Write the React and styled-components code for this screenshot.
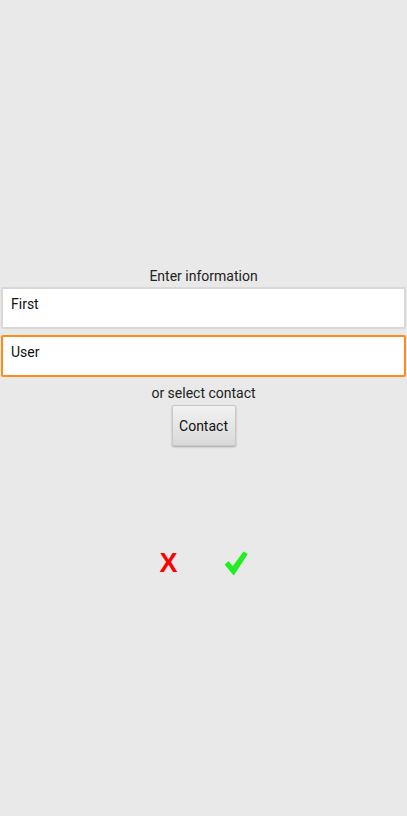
import React from "react";
import styled, { createGlobalStyle } from "styled-components";

const Global = createGlobalStyle`
  html, body {
    margin: 0;
    padding: 0;
    background: #e9e9e9;
    font-family: Roboto, "Liberation Sans", sans-serif;
  }
`;

const CheckMark = () => (
  <svg width="24" height="25" viewBox="0 0 24 25">
    <path
      d="M1.5 13.5 L4.5 11 L8.8 16.2 L19.8 1.2 L23 3.2 L9.6 23.6 Z"
      fill="#22ee22"
      stroke="#22ee22"
      strokeWidth="1.2"
      strokeLinejoin="round"
    />
  </svg>
);

const App = () => {
  return (
    <Page>
      <Global />
      <Label>Enter information</Label>
      <Field defaultValue="First" />
      <Field defaultValue="User" focused />
      <Label>or select contact</Label>
      <ContactButton>Contact</ContactButton>
      <Actions>
        <Cancel>X</Cancel>
        <Confirm>
          <CheckMark />
        </Confirm>
      </Actions>
    </Page>
  );
};

export default App;

const Page = styled.div`
  height: 816px;
  box-sizing: border-box;
  padding-top: 266px;
  display: flex;
  flex-direction: column;
  align-items: center;
`;

const Label = styled.div`
  font-size: 14px;
  color: #222;
  line-height: 18px;
  margin-top: 1px;
  margin-bottom: 2px;
`;

const Field = styled.input`
  box-sizing: border-box;
  width: 405px;
  height: 42px;
  margin: 0 1px 6px;
  padding: 0 8px 9px;
  font-family: inherit;
  font-size: 14px;
  color: #111;
  background: #fff;
  border: ${(p) => (p.focused ? "2px solid #ff8c1a" : "2px solid #d8d8d8")};
  border-radius: 2px;
  outline: none;
`;

const ContactButton = styled.button`
  width: 64px;
  height: 41px;
  margin-top: 1px;
  font-family: inherit;
  font-size: 14px;
  color: #111;
  border: 1px solid #c8c8c8;
  border-radius: 2px;
  background: linear-gradient(#f2f2f2, #d9d9d9);
  box-shadow: 0 1px 2px rgba(0, 0, 0, 0.3);
`;

const Actions = styled.div`
  display: flex;
  gap: 46px;
  margin-top: 102px;
  align-items: center;
`;

const Cancel = styled.span`
  font-size: 27px;
  line-height: 30px;
  font-weight: bold;
  color: #ff0000;
  font-family: "Liberation Sans", sans-serif;
`;

const Confirm = styled.span`
  display: flex;
  align-items: center;
`;
